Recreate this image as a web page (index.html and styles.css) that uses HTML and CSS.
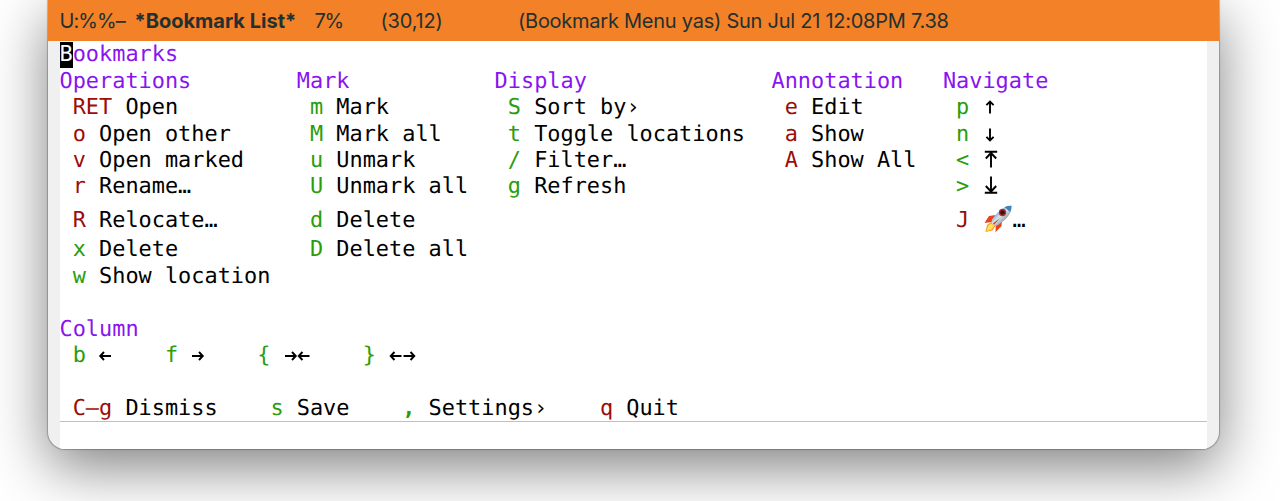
FILE: index.html
```html
<!DOCTYPE html>
<html lang="en">
<head>
<meta charset="utf-8">
<title>Bookmark List</title>
<link rel="stylesheet" href="styles.css">
</head>
<body>
<svg class="defs" width="0" height="0">
  <defs>
    <g id="arrow-left"><path d="M12 5H1M5 1 1.200 5 5 9"/></g>
    <g id="arrow-right"><path d="M0 5h11M7 1l3.800 4L7 9"/></g>
  </defs>
</svg>
<main class="window">
  <header class="modeline">
    <span class="state">U:%%–</span>
    <span class="buffer">*Bookmark List*</span>
    <span class="percent">7%</span>
    <span class="position">(30,12)</span>
    <span class="modes">(Bookmark Menu yas) Sun Jul 21 12:08PM 7.38</span>
  </header>
  <div class="frame">
    <section class="buffer-text">
      <h1><span class="cursor">B</span>ookmarks</h1>
      <div class="columns">
        <div class="col">
          <h2>Operations</h2>
          <p><b class="red">RET</b> Open</p>
          <p><b class="red">o</b> Open other</p>
          <p><b class="red">v</b> Open marked</p>
          <p><b class="red">r</b> Rename…</p>
          <p class="tall"><b class="red">R</b> Relocate…</p>
          <p><b>x</b> Delete</p>
          <p><b>w</b> Show location</p>
        </div>
        <div class="col">
          <h2>Mark</h2>
          <p><b>m</b> Mark</p>
          <p><b>M</b> Mark all</p>
          <p><b>u</b> Unmark</p>
          <p><b>U</b> Unmark all</p>
          <p class="tall"><b>d</b> Delete</p>
          <p><b>D</b> Delete all</p>
        </div>
        <div class="col">
          <h2>Display</h2>
          <p><b>S</b> Sort by›</p>
          <p><b>t</b> Toggle locations</p>
          <p><b>/</b> Filter…</p>
          <p><b>g</b> Refresh</p>
        </div>
        <div class="col">
          <h2>Annotation</h2>
          <p><b class="red">e</b> Edit</p>
          <p><b class="red">a</b> Show</p>
          <p><b class="red">A</b> Show All</p>
        </div>
        <div class="col">
          <h2>Navigate</h2>
          <p><b>p</b> <svg class="icon" width="14" height="16" viewBox="0 0 14 16"><path d="M6 14.500V3M2.400 6.200 6 2.500l3.600 3.700"/></svg></p>
          <p><b>n</b> <svg class="icon" width="14" height="16" viewBox="0 0 14 16"><path d="M6 2.500V14M2.400 10.800 6 14.500l3.600-3.700"/></svg></p>
          <p><b>&lt;</b> <svg class="icon" width="14" height="18" viewBox="0 0 14 18"><path d="M.8 1.800h12.400M7 17.500V3M1.800 8.500 7 3l5.200 5.500"/></svg></p>
          <p><b>&gt;</b> <svg class="icon" width="14" height="18" viewBox="0 0 14 18"><path d="M.8 16.800h12.400M7 .5v15M1.800 10 7 15.500l5.200-5.500"/></svg></p>
          <p class="tall"><b class="red">J</b> <svg class="rocket" width="29" height="28" viewBox="0 0 29 28">
            <defs><linearGradient id="hull" x1="0" y1="0" x2="1" y2="1"><stop offset=".15" stop-color="#3f7eb4"/><stop offset=".48" stop-color="#dce5ea"/><stop offset=".8" stop-color="#777f87"/></linearGradient></defs>
            <path fill="#e8411b" d="M12 10 5 11 .5 18l7-1zM18 15l-.5 6-6 6.200.3-7.200z"/>
            <path fill="#f99b24" d="M8 16.500 3 20 1.500 27l7-1.500L12 20z"/>
            <path fill="#ffe45a" d="M7 18.500 4 21 2.500 26l5-1.500L10 21z"/>
            <path fill="url(#hull)" d="M27.500.8C21 .5 15 5 8 14.500L7.500 18l2.800 2.800 3.500-.5C22 14.500 28 9 27.500.8z"/>
            <path fill="#3e83bd" d="M27.500.8Q24 .5 20.500 2.200L26.200 7Q27.700 4 27.500.8z"/>
            <path fill="#c7331d" d="m16 13-7 5.500 1.200 1z"/>
            <circle cx="18.500" cy="7.500" r="3" fill="#33141b" stroke="#b52c2c" stroke-width="1.300"/>
          </svg>…</p>
        </div>
      </div>
      <h2 class="column-title">Column</h2>
      <div class="line">
        <p><b>b</b> <svg class="icon" width="13.180" height="10"><use href="#arrow-left"/></svg></p>
        <p><b>f</b> <svg class="icon" width="13.180" height="10"><use href="#arrow-right" x="1"/></svg></p>
        <p><b>{</b> <svg class="icon" width="26.360" height="10"><use href="#arrow-right" x="1"/><use href="#arrow-left" x="13.500"/></svg></p>
        <p><b>}</b> <svg class="icon" width="26.360" height="10"><use href="#arrow-left" x=".5"/><use href="#arrow-right" x="14.500"/></svg></p>
      </div>
      <div class="line footer">
        <p><b class="red">C–g</b> Dismiss</p>
        <p><b>s</b> Save</p>
        <p><b class="comma">,</b> Settings›</p>
        <p><b class="red">q</b> Quit</p>
      </div>
    </section>
  </div>
</main>
</body>
</html>
```
FILE: styles.css
```css
* { box-sizing: border-box; }
body { margin: 0; height: 501px; overflow: hidden; background: #fff; }
.defs { display: block; }
.window {
  width: 1171px;
  height: 449px;
  margin-left: 48px;
  border-radius: 0 0 17px 17px;
  background: #f0f0f0;
  overflow: hidden;
  box-shadow: 0 0 1px 1px rgba(0,0,0,.25), 0 18px 58px rgba(0,0,0,.5);
}
.modeline {
  display: flex;
  height: 41px;
  padding-left: 11.5px;
  background: #f28128;
  color: #23302f;
  font: 20px/42px Inter, sans-serif;
  white-space: nowrap;
}
.state { width: 75px; letter-spacing: -.9px; }
.buffer { width: 180px; font-weight: 700; }
.percent { width: 66px; letter-spacing: -1.2px; }
.position { width: 137.5px; letter-spacing: -.2px; }
.modes { letter-spacing: -.25px; }
.frame { height: 408px; padding: 0 12px 0 11.5px; }
.buffer-text {
  height: 100%;
  padding-top: 1.2px;
  background: #fff;
  color: #000;
  font: 21.9px/26.45px "DejaVu Sans Mono", monospace;
  text-rendering: geometricPrecision;
}
h1, h2, p { margin: 0; font: inherit; height: 26.45px; white-space: pre; }
h1, h2 { color: #8a14f0; }
b { font-weight: 400; color: #2a9d0c; }
.red { color: #9c0d08; }
.comma { font-weight: 700; }
.cursor { display: inline-block; height: 26px; background: #000; color: #fff; }
.columns { display: grid; grid-template-columns: 237.3px 197.8px 276.9px 171.4px auto; height: 221.65px; }
.col p, .line p { padding-left: 13.18px; }
.col .tall { height: 36.5px; padding-top: 7px; }
.column-title { margin-top: 26.45px; }
.line { display: flex; gap: 39.55px; height: 26.45px; }
.footer { height: 52.5px; padding-top: 26.45px; border-bottom: 1px solid #c0c0c0; }
.icon { overflow: visible; fill: none; stroke: #000; stroke-width: 1.9; vertical-align: -1px; }
.col .icon { margin-left: 1.7px; }
.line .icon { vertical-align: 1px; }
.rocket { margin: -4px 0 -6px 1.2px; vertical-align: 0; }
```
